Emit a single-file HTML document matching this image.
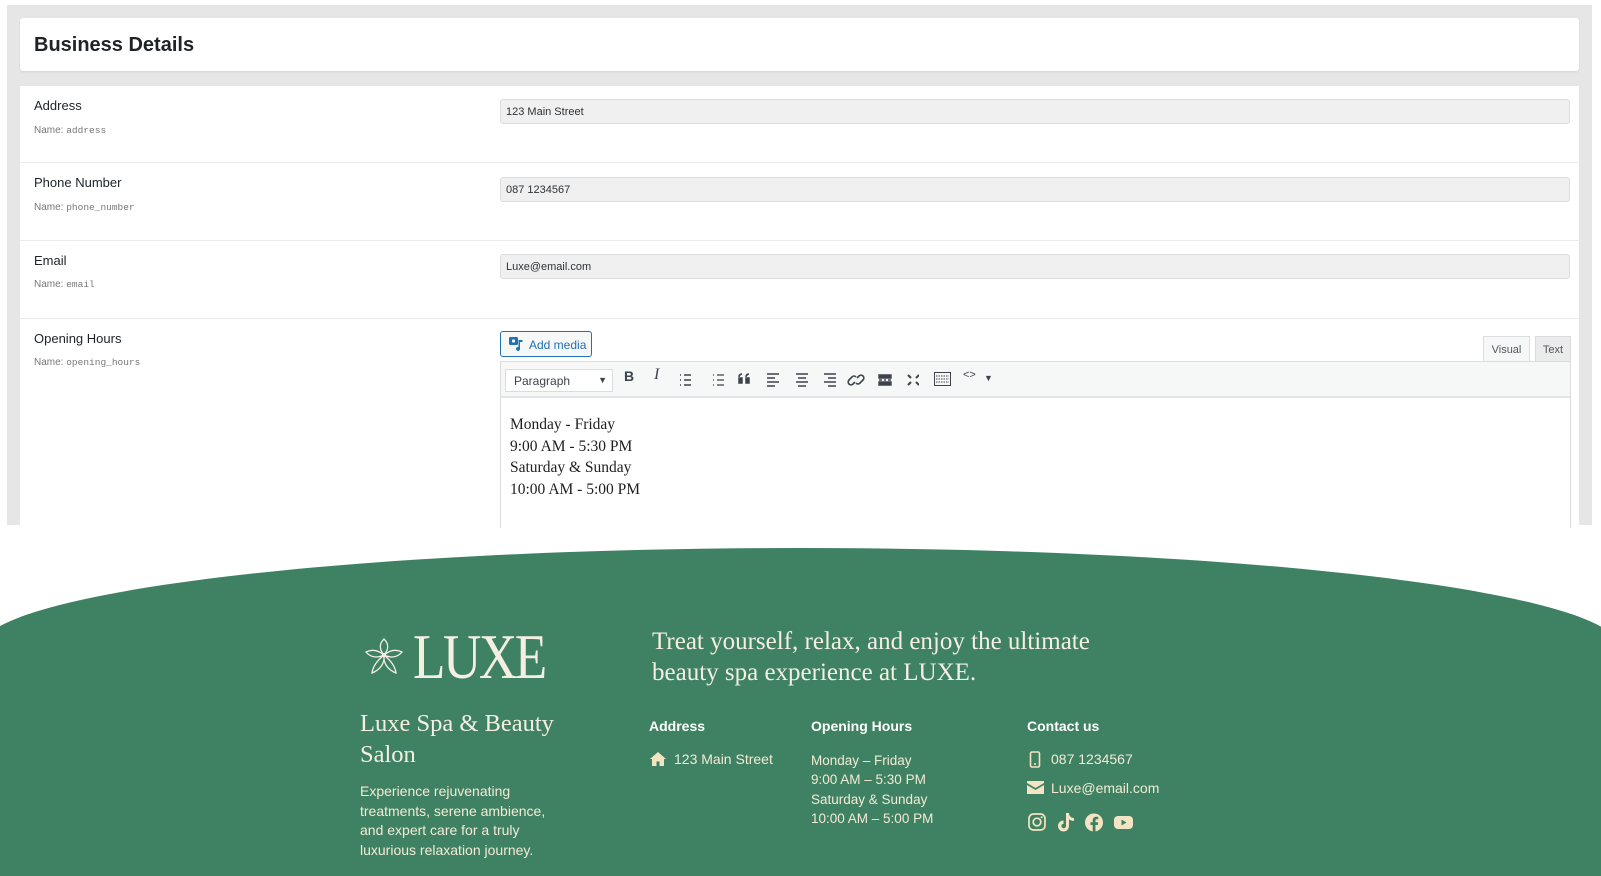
<!DOCTYPE html>
<html><head><meta charset="utf-8"><style>
*{box-sizing:border-box;margin:0;padding:0}
body{width:1601px;height:876px;overflow:hidden;background:#fff;font-family:"Liberation Sans",sans-serif;position:relative}
.abs{position:absolute}
.panel{left:7px;top:5px;width:1585px;height:520px;background:#e6e6e6}
.hdr{left:20px;top:18px;width:1559px;height:53px;background:#fff;border-radius:3px;box-shadow:0 1px 2px rgba(0,0,0,.08)}
.hdr h1{position:absolute;left:14px;top:16px;font-size:20px;font-weight:bold;color:#1d2327}
.form{left:20px;top:86px;width:1559px;height:439px;background:#fff}
.sep{left:20px;width:1559px;height:1px;background:#ececec}
.lbl{font-size:13px;color:#1d2327}
.nm{font-size:10px;color:#777}
.nm code{font-family:"Liberation Mono",monospace;font-size:9.5px}
.inp{left:500px;width:1070px;height:25px;background:#f0f0f0;border:1px solid #ddd;border-radius:3px;font-size:11px;color:#2c3338;padding:6px 5px}
.tb{position:absolute;top:368px;font-size:14px;color:#3c434a}
.ed{font-family:"Liberation Serif",serif;font-size:15.5px;color:#1e1e1e;left:510px}
.green{color:#f3ead6}
.ft{font-family:"Liberation Sans",sans-serif}
.serif{font-family:"Liberation Serif",serif;color:#f4efe2}
</style></head><body>
<div class="abs panel"></div>
<div class="abs hdr"><h1>Business Details</h1></div>
<div class="abs form"></div>
<div class="abs sep" style="top:162px"></div>
<div class="abs sep" style="top:240px"></div>
<div class="abs sep" style="top:318px"></div>

<div class="abs lbl" style="left:34px;top:98px">Address</div>
<div class="abs nm" style="left:34px;top:125px">Name: <code>address</code></div>
<div class="abs inp" style="top:99px">123 Main Street</div>

<div class="abs lbl" style="left:34px;top:175px">Phone Number</div>
<div class="abs nm" style="left:34px;top:202px">Name: <code>phone_number</code></div>
<div class="abs inp" style="top:177px">087 1234567</div>

<div class="abs lbl" style="left:34px;top:253px">Email</div>
<div class="abs nm" style="left:34px;top:279px">Name: <code>email</code></div>
<div class="abs inp" style="top:254px">Luxe@email.com</div>

<div class="abs lbl" style="left:34px;top:331px">Opening Hours</div>
<div class="abs nm" style="left:34px;top:357px">Name: <code>opening_hours</code></div>

<div class="abs" style="left:500px;top:331px;width:92px;height:26px;border:1px solid #2271b1;border-radius:3px;background:#f6f7f7;color:#2271b1;font-size:12px;padding:6px 0 0 28px">Add media
<svg style="position:absolute;left:8px;top:5px" width="16" height="15" viewBox="0 0 16 15"><rect x="0" y="0" width="9" height="8" rx="1.5" fill="#2271b1"/><circle cx="4.5" cy="4" r="1.6" fill="#f6f7f7"/><path d="M11 4v8a2 2 0 1 1-1.5-2V3h4v2h-2.5z" fill="#2271b1"/></svg></div>

<div class="abs" style="left:1483px;top:336px;width:47px;height:25px;background:#f6f7f7;border:1px solid #dcdcde;border-bottom:none;font-size:11px;color:#50575e;text-align:center;padding-top:7px">Visual</div>
<div class="abs" style="left:1535px;top:336px;width:36px;height:25px;background:#ebebeb;border:1px solid #dcdcde;border-bottom:none;font-size:11px;color:#50575e;text-align:center;padding-top:7px">Text</div>

<div class="abs" style="left:500px;top:361px;width:1071px;height:37px;background:#f6f7f7;border:1px solid #dcdcde;border-bottom:2px solid #e2e4e7"></div>
<div class="abs" style="left:500px;top:398px;width:1071px;height:130px;border-left:1px solid #dcdcde;border-right:1px solid #dcdcde"></div>
<div class="abs" style="left:505px;top:369px;width:108px;height:23px;background:#fff;border:1px solid #dcdcde;font-size:12px;color:#3c434a;padding:4px 8px">Paragraph<span style="position:absolute;right:5px;top:5px;font-size:9px">▼</span></div>
<span class="tb" style="left:624px;font-weight:bold">B</span>
<span class="tb" style="left:654px;font-style:italic;font-family:'Liberation Serif',serif;font-size:16px;top:366px">I</span>
<svg class="abs" style="left:679px;top:373px" width="240" height="14" viewBox="0 0 240 14" fill="none" stroke="#3c434a" stroke-width="1.4">
<path d="M1 2h1M1 7h1M1 12h1M5 2h7M5 7h7M5 12h7"/>
<path d="M34 2h1M34 7h1M34 12h1M38 2h7M38 7h7M38 12h7" stroke-width="1.2"/>
<path d="M60 4q0-3 3-3M60 5h3v5h-3zM67 4q0-3 3-3M67 5h3v5h-3z" fill="#3c434a" stroke-width="1.5"/>
<path d="M88 1h12M88 5h8M88 9h12M88 13h8"/>
<path d="M117 1h12M119 5h8M117 9h12M119 13h8"/>
<path d="M145 1h12M149 5h8M145 9h12M149 13h8"/>
<path d="M176 9l-2 2a2.5 2.5 0 0 1-4-4l3-3a2.5 2.5 0 0 1 4 0M178 5l2-2a2.5 2.5 0 0 1 4 4l-3 3a2.5 2.5 0 0 1-4 0" stroke-width="1.6"/>
<path d="M200 2h12v3h-12zM200 7h3M205 7h2M209 7h3M200 9h12v3h-12z" fill="#3c434a"/>
<path d="M229 2l3 3M240 2l-3 3M229 12l3-3M240 12l-3-3" stroke-width="2"/>
</svg>
<svg class="abs" style="left:934px;top:372px" width="18" height="15" viewBox="0 0 18 15" fill="none" stroke="#3c434a"><rect x=".5" y=".5" width="16" height="13"/><path d="M2 4h13M2 7h13M2 10h13" stroke-dasharray="1.5 1"/></svg>
<span class="tb" style="left:963px;top:369px;font-size:11px">&lt;&gt;</span>
<span class="tb" style="left:984px;top:373px;font-size:9px">▼</span>

<div class="abs ed" style="top:414px;line-height:21.7px">Monday - Friday<br>9:00 AM - 5:30 PM<br>Saturday &amp; Sunday<br>10:00 AM - 5:00 PM</div>

<svg class="abs" style="left:0;top:540px" width="1601" height="336"><ellipse cx="800" cy="108" rx="820" ry="100" fill="#3f8263"/><rect x="0" y="100" width="1601" height="236" fill="#3f8263"/></svg>

<svg class="abs" style="left:364px;top:637px" width="40" height="40" viewBox="0 0 40 40" fill="none" stroke="#f4efe2" stroke-width="1.3"><path d="M20 2c-5 5-5 10 0 16c5-6 5-11 0-16zM2 15c6-3 12-2 18 3c-6 3-13 3-18-3zM38 15c-6-3-12-2-18 3c6 3 13 3 18-3zM8 36c1-7 5-12 12-18c1 8-4 15-12 18zM32 36c-1-7-5-12-12-18c-1 8 4 15 12 18z"/><circle cx="20" cy="18" r="1.5" fill="#f4efe2"/></svg>
<div class="abs serif" style="left:413px;top:624px;font-size:64px;line-height:66px;letter-spacing:-3px;transform:scaleX(0.83);transform-origin:0 0">LUXE</div>
<div class="abs serif" style="left:652px;top:626px;font-size:25px;line-height:31px">Treat yourself, relax, and enjoy the ultimate<br>beauty spa experience at LUXE.</div>
<div class="abs serif" style="left:360px;top:708px;font-size:24.5px;line-height:31px">Luxe Spa &amp; Beauty<br>Salon</div>
<div class="abs ft green" style="left:360px;top:782px;font-size:14px;line-height:19.5px">Experience rejuvenating<br>treatments, serene ambience,<br>and expert care for a truly<br>luxurious relaxation journey.</div>

<div class="abs ft" style="left:649px;top:718px;font-size:14px;font-weight:bold;color:#fff">Address</div>
<svg class="abs" style="left:650px;top:752px" width="16" height="14" viewBox="0 0 16 14" fill="#f3e4c4"><path d="M8 0L0 7h2v7h4.5V9.5h3V14H14V7h2z"/></svg>
<div class="abs ft green" style="left:674px;top:751px;font-size:14px">123 Main Street</div>

<div class="abs ft" style="left:811px;top:718px;font-size:14px;font-weight:bold;color:#fff">Opening Hours</div>
<div class="abs ft green" style="left:811px;top:751px;font-size:13.5px;line-height:19.4px">Monday – Friday<br>9:00 AM – 5:30 PM<br>Saturday &amp; Sunday<br>10:00 AM – 5:00 PM</div>

<div class="abs ft" style="left:1027px;top:718px;font-size:14px;font-weight:bold;color:#fff">Contact us</div>
<svg class="abs" style="left:1029px;top:751px" width="12" height="17" viewBox="0 0 12 17" fill="none" stroke="#f3e4c4" stroke-width="1.6"><rect x="1.5" y="1" width="9" height="15" rx="1.5"/><path d="M5 13h2"/></svg>
<div class="abs ft green" style="left:1051px;top:751px;font-size:14px">087 1234567</div>
<svg class="abs" style="left:1027px;top:781px" width="17" height="13" viewBox="0 0 17 13" fill="#f3e4c4"><path d="M0 0h17v2L8.5 7 0 2zM0 4l8.5 5L17 4v9H0z"/></svg>
<div class="abs ft green" style="left:1051px;top:780px;font-size:14px">Luxe@email.com</div>

<svg class="abs" style="left:1028px;top:813px" width="110" height="19" viewBox="0 0 110 19">
<g fill="none" stroke="#f3e4c4" stroke-width="1.7"><rect x="1" y="1" width="16" height="16" rx="4.5"/><circle cx="9" cy="9" r="3.8"/></g><circle cx="13.7" cy="4.3" r="1" fill="#f3e4c4"/>
<path d="M38 0h3c0 3 2 5 5 5v3c-2 0-3.5-.6-5-1.6V13a5.5 5.5 0 1 1-5.5-5.5v3.2A2.3 2.3 0 1 0 38 13z" fill="#f3e4c4"/>
<circle cx="66" cy="9.5" r="9" fill="#f3e4c4"/><path d="M67.5 19v-7h2.3l.4-2.8h-2.7V7.6c0-.8.3-1.3 1.4-1.3h1.4V3.8c-.3 0-1.100-.1-2.1-.1-2.1 0-3.5 1.3-3.5 3.6v1.9H62.5V12h2.2v7z" fill="#3f8263"/>
<rect x="86" y="3" width="19" height="13" rx="4" fill="#f3e4c4"/><path d="M93.5 6.5v6l5-3z" fill="#3f8263"/>
</svg>
</body></html>
